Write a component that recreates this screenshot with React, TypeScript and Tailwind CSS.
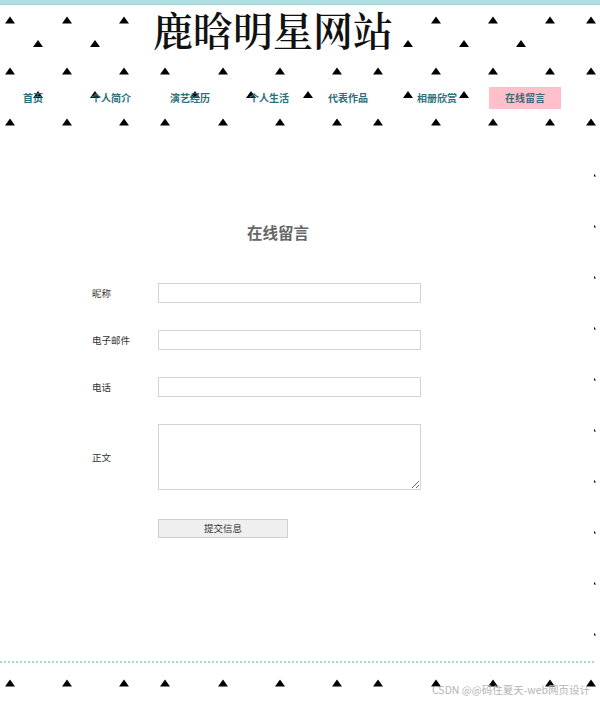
import React from 'react';

const navItems = [
  { label: '首页', cls: 'w-[66px]' },
  { label: '个人简介', cls: 'w-[72px] ml-[9px]' },
  { label: '演艺经历', cls: 'w-[72px] ml-[7px]' },
  { label: '个人生活', cls: 'w-[72px] ml-[7px]' },
  { label: '代表作品', cls: 'w-[72px] ml-[7px]' },
  { label: '相册欣赏', cls: 'w-[72px] ml-[17px]' },
];

const fields = [
  { label: '昵称', mt: 'mt-[39px]' },
  { label: '电子邮件', mt: 'mt-[27px]' },
  { label: '电话', mt: 'mt-[27px]' },
];

// black triangles tiled over the page background
const TrianglePattern = () => {
  const tri = (cx: number, cy: number) =>
    `${cx - 5},${cy + 3.5} ${cx + 5},${cy + 3.5} ${cx},${cy - 3.5}`;
  return (
    <svg className="absolute inset-0 w-full h-full" aria-hidden="true">
      <defs>
        <pattern id="tri" width="213" height="51" patternUnits="userSpaceOnUse">
          {[10, 67, 124, 165].map((x) => (
            <polygon key={`a${x}`} points={tri(x, 20)} fill="#000" />
          ))}
          {[38, 95, 195].map((x) => (
            <polygon key={`b${x}`} points={tri(x, 43.5)} fill="#000" />
          ))}
        </pattern>
      </defs>
      <rect width="100%" height="100%" fill="#fff" />
      <rect width="100%" height="100%" fill="url(#tri)" />
    </svg>
  );
};

export default function App() {
  return (
    <div
      className="relative w-full h-[702px] overflow-hidden"
      style={{ fontFamily: '"Noto Sans CJK SC", "Noto Sans", sans-serif' }}
    >
      <TrianglePattern />
      <div className="relative flex flex-col h-full">
        <header className="h-[130px] shrink-0 flex flex-col">
          <div className="h-[5px] bg-[#b4dee2] border-b border-[#9fcfd5]" />
          <div className="mt-[3px] pl-[153px] flex">
            <h1
              className="bg-white text-[40px] leading-[42px] font-semibold text-[#111]"
              style={{ fontFamily: '"Noto Serif CJK SC", "Noto Sans CJK SC", serif' }}
            >
              鹿晗明星网站
            </h1>
          </div>
          <nav className="mt-[37px] flex items-center h-[22px]">
            {navItems.map((item) => (
              <a
                key={item.label}
                className={`${item.cls} text-center text-[10px] font-bold text-[#2b6f7b] leading-[22px]`}
              >
                {item.label}
              </a>
            ))}
            <a className="w-[72px] ml-[16px] h-[22px] bg-[#ffc0cb] text-center text-[10px] font-bold text-[#3b6b79] leading-[22px]">
              在线留言
            </a>
          </nav>
        </header>

        <main className="w-[594px] h-[533px] shrink-0 bg-white border-b-2 border-dotted border-[#9fd8dd] flex flex-col">
          <h2 className="mt-[90px] w-[556px] text-center text-[15.5px] leading-[24px] font-bold text-[#666]">
            在线留言
          </h2>
          {fields.map((f) => (
            <div key={f.label} className={`${f.mt} flex items-center`}>
              <span className="ml-[92px] w-[66px] text-[9.5px] text-[#333]">{f.label}</span>
              <input className="w-[263px] h-[20px] border border-[#d4d4d4] bg-white outline-none" />
            </div>
          ))}
          <div className="mt-[27px] flex items-center">
            <span className="ml-[92px] w-[66px] text-[9.5px] text-[#333]">正文</span>
            <textarea className="w-[263px] h-[66px] border border-[#d4d4d4] bg-white outline-none block" />
          </div>
          <div className="mt-[29px] pl-[158px] flex">
            <button className="w-[130px] h-[19px] bg-[#efefef] border border-[#cfcfcf] text-[9.5px] text-[#333] leading-[17px]">
              提交信息
            </button>
          </div>
        </main>

        <footer className="flex-1 flex justify-end items-end pb-[4px] pr-[10px]">
          <span className="text-[10.5px] text-[#b5b5b5] leading-[16px]">CSDN @@码住夏天-web网页设计</span>
        </footer>
      </div>
    </div>
  );
}
